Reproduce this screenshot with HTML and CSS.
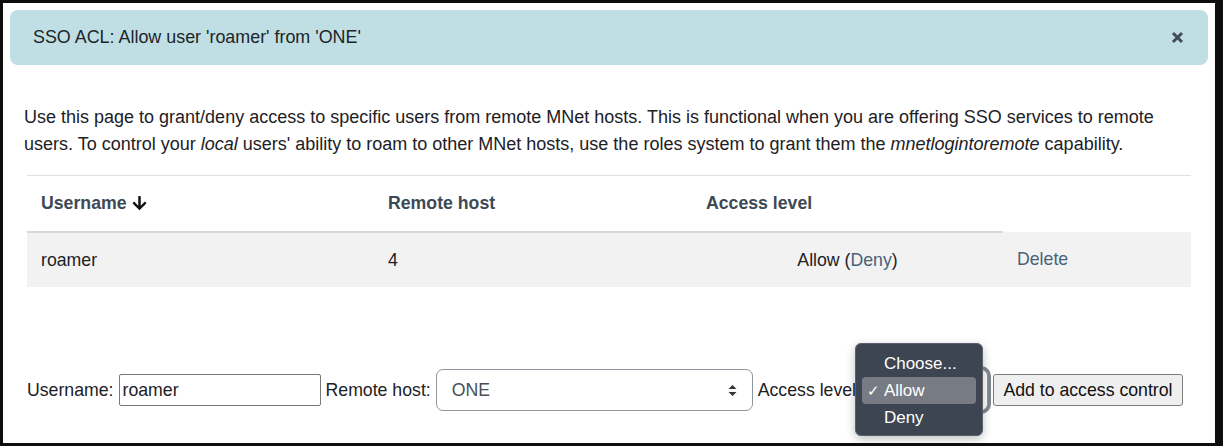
FILE: index.html
```html
<!DOCTYPE html>
<html lang="en">
<head>
<meta charset="utf-8">
<title>SSO ACL</title>
<link rel="stylesheet" href="styles.css">
</head>
<body>
<div class="frame">
  <div class="alert">
    <span class="alert-text">SSO ACL: Allow user 'roamer' from 'ONE'</span>
    <span class="close" aria-label="Close">
      <svg width="13" height="13" viewBox="0 0 13 13"><path d="M2 2 L11 11 M11 2 L2 11" stroke="#444d57" stroke-width="3" stroke-linecap="butt"/></svg>
    </span>
  </div>
  <div class="content">
    <p class="intro">Use this page to grant/deny access to specific users from remote MNet hosts. This is functional when you are offering SSO services to remote users. To control your <em>local</em> users' ability to roam to other MNet hosts, use the roles system to grant them the <em>mnetlogintoremote</em> capability.</p>
    <table class="acl">
      <colgroup><col class="c1"><col class="c2"><col class="c3"><col class="c4"></colgroup>
      <thead>
        <tr>
          <th>Username <svg class="sort" width="15" height="16" viewBox="0 0 448 512"><path fill="#111" d="M413.1 222.5l22.2 22.2c9.4 9.4 9.4 24.6 0 33.9L241 473c-9.4 9.4-24.6 9.4-33.9 0L12.7 278.6c-9.4-9.4-9.4-24.6 0-33.9l22.2-22.2c9.5-9.5 25-9.3 34.3.4L184 343.4V56c0-13.3 10.7-24 24-24h32c13.3 0 24 10.7 24 24v287.4l114.8-120.5c9.3-9.8 24.8-10 34.3-.4z"/></svg></th>
          <th>Remote host</th>
          <th>Access level</th>
          <th class="blank"></th>
        </tr>
      </thead>
      <tbody>
        <tr>
          <td>roamer</td>
          <td>4</td>
          <td class="center">Allow (<a href="#">Deny</a>)</td>
          <td><a href="#">Delete</a></td>
        </tr>
      </tbody>
    </table>
    <form class="addform">
      <label>Username:</label>
      <span class="txt">roamer</span>
      <label>Remote host:</label>
      <span class="select host">ONE
        <svg class="arrows" width="9" height="13" viewBox="0 0 9 13"><path d="M4.5 1 L8.5 5 L0.5 5 Z M4.5 12 L8.5 8 L0.5 8 Z" fill="#2f363d"/></svg>
      </span>
      <label>Access level:</label>
      <span class="select-wrap">
        <span class="select level"></span>
        <span class="popup">
          <span class="opt">Choose...</span>
          <span class="opt active"><span class="check">✓</span>Allow</span>
          <span class="opt">Deny</span>
        </span>
      </span>
      <span class="btn">Add to access control</span>
    </form>
  </div>
</div>
</body>
</html>
```

FILE: styles.css
```css
html {
  background: #0d0d0d;
}
body {
  margin: 0;
  font-family: "Liberation Sans", Arial, sans-serif;
  font-size: 17.7px;
  color: #1d2125;
}
.frame {
  margin: 3px 8px 3px 3px;
  height: 440px;
  background: #fff;
  overflow: hidden;
  padding-top: 7px;
  box-sizing: border-box;
}
.alert {
  margin: 0 7px;
  height: 55px;
  background: #c0dfe4;
  border-radius: 8px;
  display: flex;
  align-items: center;
  justify-content: space-between;
  padding: 0 24px 0 23px;
}
.alert-text {
  color: #1e2529;
  font-size: 17.9px;
}
.close {
  display: flex;
  align-items: center;
}
.content {
  padding: 0 24px 0 21px;
}
.intro {
  margin: 39px 0 18px;
  font-size: 18px;
  line-height: 26.5px;
}
.acl {
  width: calc(100% - 3px);
  margin-left: 3px;
  border-collapse: collapse;
  table-layout: fixed;
  border-top: 1px solid #dee2e6;
}
.c1 { width: 347px; }
.c2 { width: 318px; }
.c3 { width: 311px; }
.c4 { width: auto; }
.acl th {
  height: 55px;
  padding: 0 14px;
  text-align: left;
  font-weight: bold;
  color: #3d4955;
  border-bottom: 2px solid #d6dadd;
  vertical-align: middle;
}
.acl th.blank {
  border-bottom: none;
}
.sort {
  vertical-align: -2px;
  margin-left: 1px;
}
.acl td {
  height: 54px;
  padding: 0 14px;
  background: #f2f2f2;
  vertical-align: middle;
}
.acl td.center {
  text-align: center;
}
.acl a {
  color: #48627b;
  text-decoration: none;
}
.addform {
  margin-top: 82px;
  margin-left: 3px;
  display: flex;
  align-items: center;
  gap: 5px;
}
.txt {
  box-sizing: border-box;
  width: 202px;
  height: 32px;
  border: 1px solid #7a7a7a;
  border-radius: 2px;
  padding: 0 3px;
  display: flex;
  align-items: center;
}
.select {
  box-sizing: border-box;
  height: 42px;
  border: 1px solid #8f959e;
  border-radius: 7px;
  background: #fff;
  display: flex;
  align-items: center;
  justify-content: space-between;
  color: #495057;
}
.select.host {
  width: 317px;
  padding: 0 15px 0 15px;
}
.select-wrap {
  position: relative;
  display: flex;
}
.select.level {
  width: 122px;
  box-shadow: 0 0 0 3px #7e8792;
}
.popup {
  position: absolute;
  left: -11px;
  top: -26px;
  width: 128px;
  height: 93px;
  box-sizing: border-box;
  background: #3d4552;
  border: 1px solid #59616c;
  border-radius: 6px;
  box-shadow: 0 3px 10px rgba(0, 0, 0, 0.25);
  padding: 6px 6px 0;
  display: flex;
  flex-direction: column;
  z-index: 2;
}
.opt {
  position: relative;
  height: 27px;
  line-height: 27px;
  padding-left: 22px;
  color: #fff;
  font-size: 17px;
  border-radius: 4px;
}
.opt.active {
  background: #777c84;
}
.check {
  position: absolute;
  left: 5px;
  top: 0;
  font-size: 15px;
}
.btn {
  box-sizing: border-box;
  width: 190px;
  height: 32px;
  background: #efefef;
  border: 1px solid #7a7a7a;
  border-radius: 3px;
  display: flex;
  align-items: center;
  justify-content: center;
  color: #111;
}
```
